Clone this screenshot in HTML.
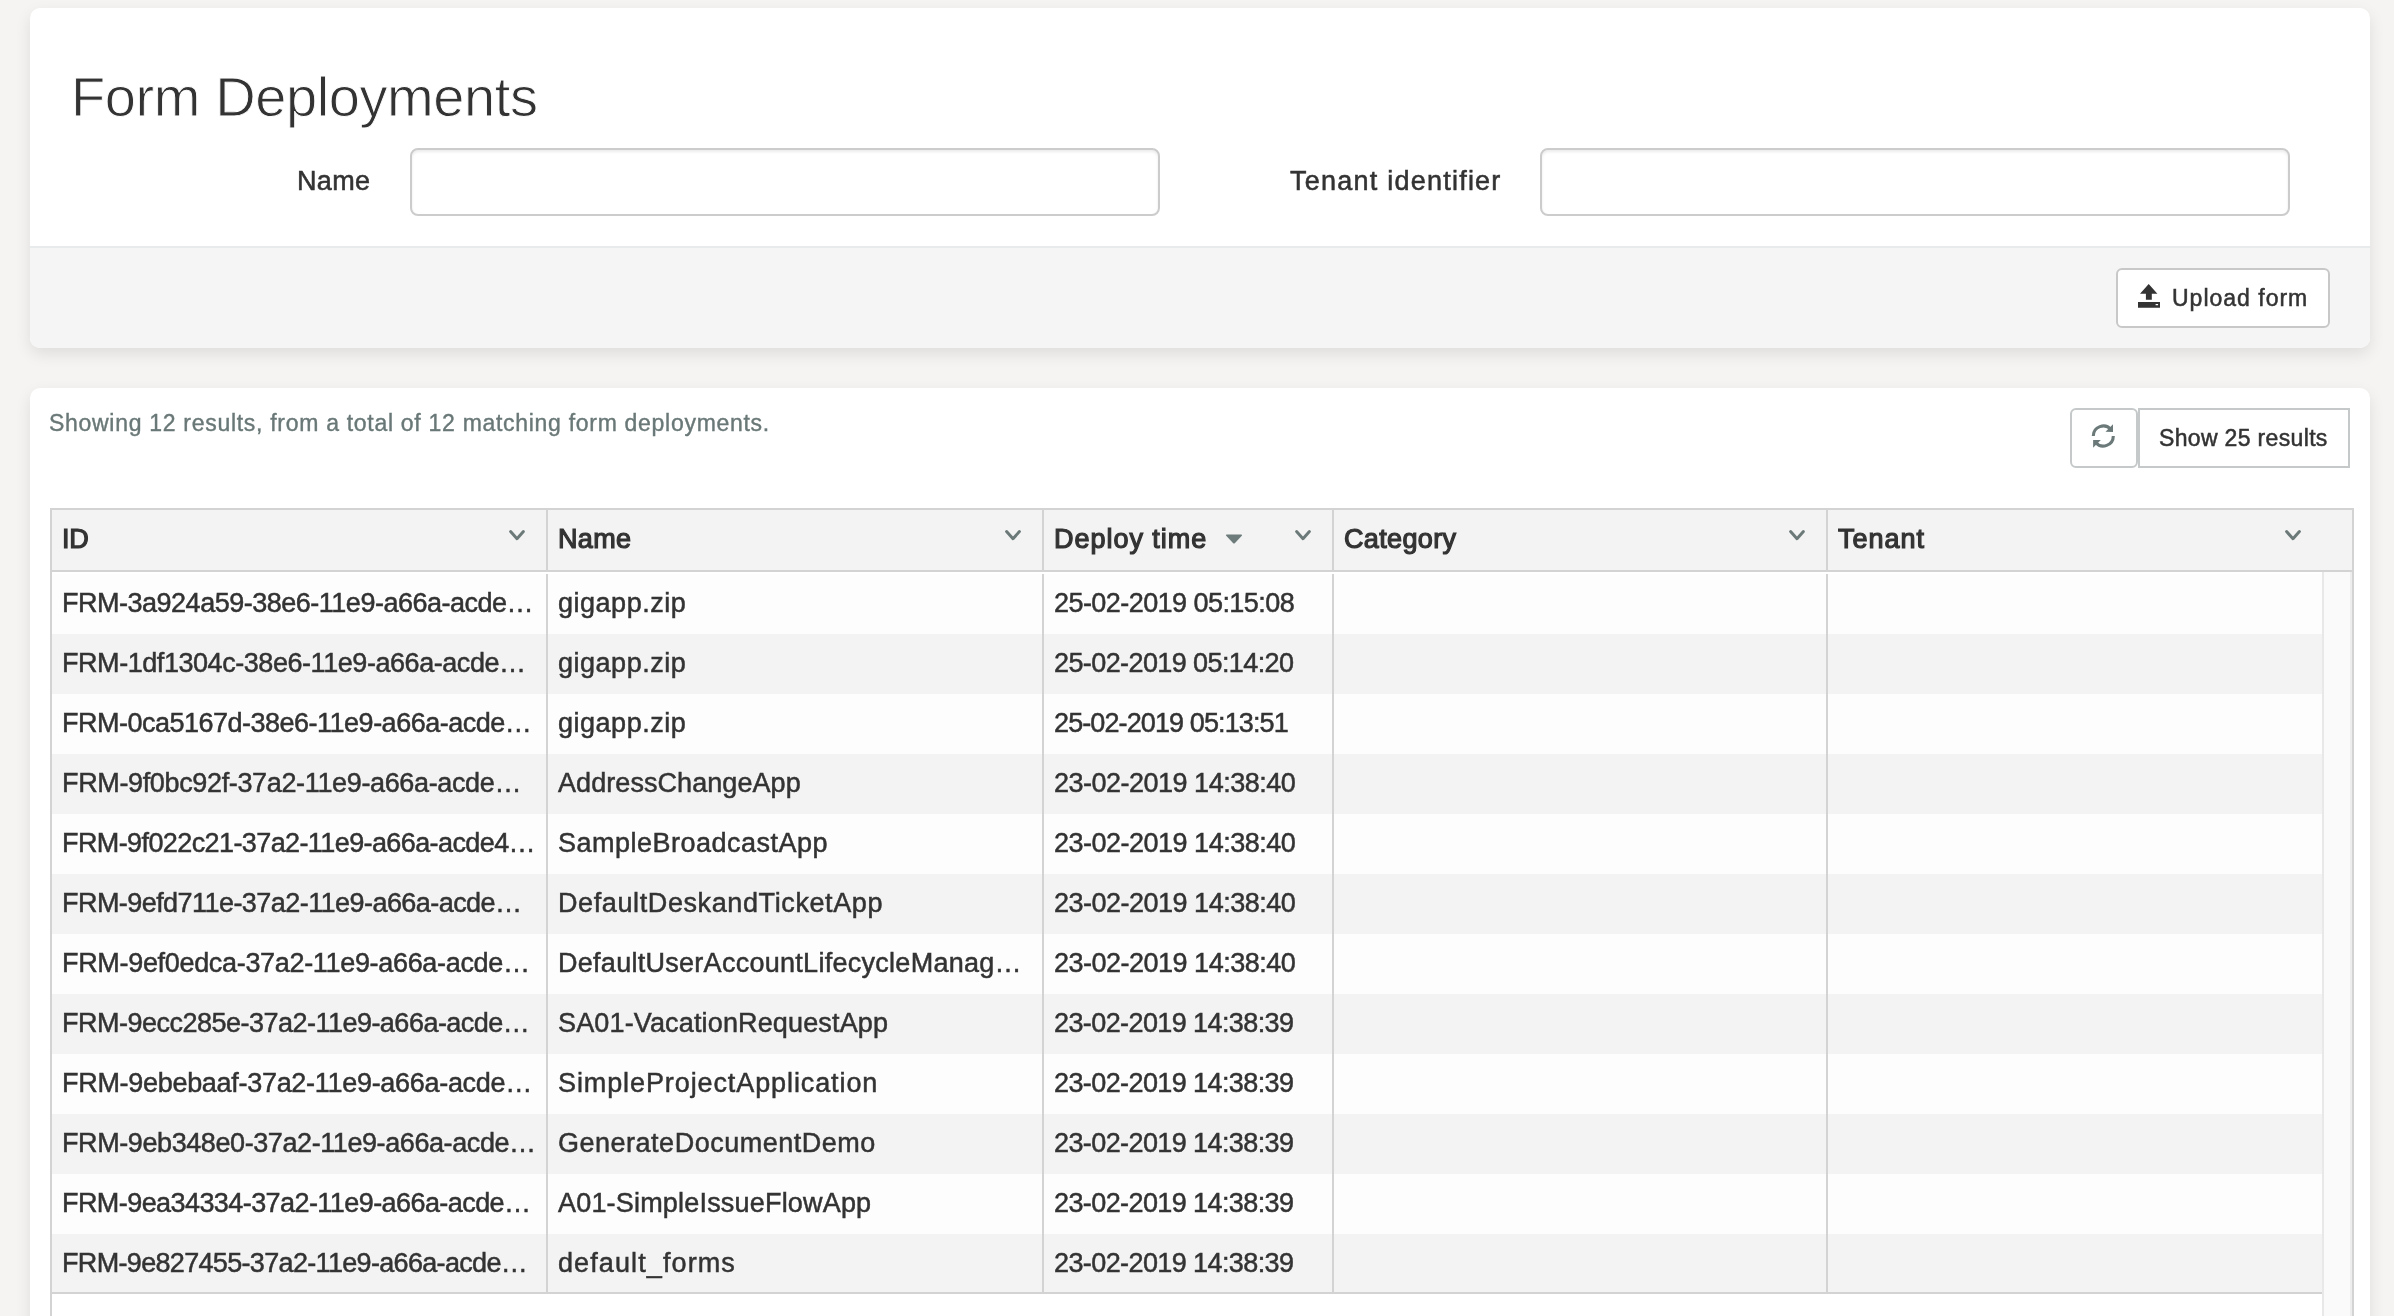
<!DOCTYPE html>
<html lang="en">
<head>
<meta charset="utf-8">
<title>Form Deployments</title>
<style>
*{box-sizing:border-box;margin:0;padding:0}
html,body{width:2394px;height:1316px;overflow:hidden;background:#f5f4f2}
body{font-family:"Liberation Sans",sans-serif;color:#333}
#page{position:relative;width:2394px;height:1316px;overflow:hidden}
#page>*{position:absolute}
h1,.lbl,.btn span,#showing,.th,.c{will-change:transform}
.card{left:30px;width:2340px;background:#fff;border-radius:10px;box-shadow:0 6px 16px rgba(0,0,0,.095)}
#c1{top:8px;height:340px}
#c2{top:388px;height:1000px}
h1{left:70.6px;top:62px;font-size:56px;font-weight:400;line-height:70px;white-space:nowrap;color:#333;-webkit-text-stroke:.9px #fff}
.lbl{top:148px;height:68px;line-height:66px;font-size:27px;white-space:nowrap;color:#333;-webkit-text-stroke:.55px #333;display:block}
#l1{right:2024px}
#l2{right:892.4px}
.inp{display:block;outline:none;padding:0 20px;font:27px "Liberation Sans",sans-serif;color:#333;top:148px;width:750px;height:68px;border:2px solid #ccc;border-radius:8px;background:#fff;box-shadow:inset 0 2px 3px rgba(0,0,0,.08)}
#i1{left:410px}
#i2{left:1540px}
#foot{left:30px;top:246px;width:2340px;height:102px;background:#f5f5f5;border-top:2px solid #e8ebec;border-radius:0 0 10px 10px}
.btn{display:block;padding:0;margin:0;font-family:"Liberation Sans",sans-serif;text-align:left;cursor:pointer;overflow:visible;height:60px;border:2px solid #c8c8c8;background:#fff;border-radius:6px;font-size:23px;line-height:56px;white-space:nowrap;color:#333;-webkit-text-stroke:.5px #333}
.btn>*{position:absolute}
#upload{left:2116px;top:268px;width:214px}
.ico-up{left:20px;top:14px;fill:#333}
#uptxt{left:54px;top:0}
#showing{left:48.5px;top:398px;font-size:23px;line-height:50px;color:#697877;white-space:nowrap;-webkit-text-stroke:.4px #697877}
#refresh{left:2070px;top:408px;width:68px;border-color:#c5c9c9}
.ico-rf{left:19px;top:13px;stroke:#6b7979}
.ico-rf .f{fill:#6b7979;stroke:none}
#show25{left:2138px;top:408px;width:212px;border-radius:0;border-color:#c5c9c9}
#s25txt{left:19px;top:0}
#grid{left:50px;top:508px;width:2304px;height:900px;border:2px solid #d3d3d3;border-bottom:none;background:#fff}
#ghead{left:52px;top:510px;width:2300px;height:62px;background:#f3f3f3;border-bottom:2px solid #d3d3d3}
.th{top:510px;height:60px;line-height:58px;font-size:27px;white-space:nowrap;color:#333;-webkit-text-stroke:1.2px #333}
.chev{top:528.5px;fill:none;stroke:#6b7978;stroke-width:3;stroke-linecap:round;stroke-linejoin:round}
.vh{top:510px;width:2px;height:60px;background:#d3d3d3}
.vb{top:574px;width:2px;height:720px;background:#d3d3d3}
.sorttri{left:1224.6px;top:533.8px;fill:#6d7b7b}
.row{left:52px;width:2270px;height:60px;background:#fdfdfd}
.row.odd{background:#f3f3f3}
.c{height:60px;line-height:58px;font-size:27px;white-space:nowrap;color:#333;-webkit-text-stroke:.5px #333}
#gbot{left:52px;top:1292px;width:2270px;height:2px;background:#d3d3d3}
#sbar{left:2322px;top:572px;width:30px;height:900px;background:#fafafa;border-left:2px solid #e8e8e8;border-right:2px solid #ededed}

</style>
</head>
<body>
<div id="page">
<div class="card" id="c1"></div>
<div class="card" id="c2"></div>
<h1 id="title" style="letter-spacing:-0.406px">Form Deployments</h1>
<label class="lbl" id="l1" for="i1" style="letter-spacing:0.312px">Name</label><input class="inp" id="i1" type="text">
<label class="lbl" id="l2" for="i2" style="letter-spacing:1.233px">Tenant identifier</label><input class="inp" id="i2" type="text">
<div id="foot"></div>
<button type="button" class="btn" id="upload"><svg class="ico-up" viewBox="0 0 22 24" width="22" height="24"><path d="M10.7 0 L19.4 9.8 H13.8 V15.8 H7.9 V9.8 H2 Z"/><path d="M0 18.1 H22 V23.8 H0 Z M17.6 20 V21.2 H20.1 V20 Z" fill-rule="evenodd"/></svg><span id="uptxt" style="letter-spacing:0.997px">Upload form</span></button>
<div id="showing" style="letter-spacing:0.706px">Showing 12 results, from a total of 12 matching form deployments.</div>
<button type="button" class="btn" id="refresh" title="Refresh"><svg viewBox="0 0 25 26" width="25" height="26" class="ico-rf"><path d="M2.3 13 A10 10 0 0 1 19.96 6.57" fill="none" stroke-width="3.1"/><path d="M22.3 13 A10 10 0 0 1 4.64 19.43" fill="none" stroke-width="3.1"/><path class="f" d="M22 1.2 V8.9 L14.5 8.7 Z"/><path class="f" d="M2.1 24.7 V17.1 H9.8 Z"/></svg></button>
<button type="button" class="btn" id="show25"><span id="s25txt" style="letter-spacing:0.338px">Show 25 results</span></button>
<div id="grid"></div>
<div id="ghead"></div>
<div class="row" style="top:574px"></div>
<div class="row odd" style="top:634px"></div>
<div class="row" style="top:694px"></div>
<div class="row odd" style="top:754px"></div>
<div class="row" style="top:814px"></div>
<div class="row odd" style="top:874px"></div>
<div class="row" style="top:934px"></div>
<div class="row odd" style="top:994px"></div>
<div class="row" style="top:1054px"></div>
<div class="row odd" style="top:1114px"></div>
<div class="row" style="top:1174px"></div>
<div class="row odd" style="top:1234px"></div>
<div id="gbot"></div>
<div id="sbar"></div>
<div class="th" style="left:62px;letter-spacing:-0.305px">ID</div>
<svg class="chev" style="left:507px" width="20" height="14" viewBox="0 0 20 14"><path d="M3.6 2.6 L10 9.7 L16.4 2.6"/></svg>
<div class="vh" style="left:546px"></div><div class="vb" style="left:546px"></div>
<div class="th" style="left:558px;letter-spacing:0.312px">Name</div>
<svg class="chev" style="left:1003px" width="20" height="14" viewBox="0 0 20 14"><path d="M3.6 2.6 L10 9.7 L16.4 2.6"/></svg>
<div class="vh" style="left:1042px"></div><div class="vb" style="left:1042px"></div>
<div class="th" style="left:1054px;letter-spacing:0.972px">Deploy time</div>
<svg class="chev" style="left:1293px" width="20" height="14" viewBox="0 0 20 14"><path d="M3.6 2.6 L10 9.7 L16.4 2.6"/></svg>
<div class="vh" style="left:1332px"></div><div class="vb" style="left:1332px"></div>
<div class="th" style="left:1344px;letter-spacing:0.352px">Category</div>
<svg class="chev" style="left:1787px" width="20" height="14" viewBox="0 0 20 14"><path d="M3.6 2.6 L10 9.7 L16.4 2.6"/></svg>
<div class="vh" style="left:1826px"></div><div class="vb" style="left:1826px"></div>
<div class="th" style="left:1838px;letter-spacing:0.987px">Tenant</div>
<svg class="chev" style="left:2283px" width="20" height="14" viewBox="0 0 20 14"><path d="M3.6 2.6 L10 9.7 L16.4 2.6"/></svg>
<svg class="sorttri" width="18" height="10" viewBox="0 0 18 10"><path d="M1.6 0.6 H16.4 Q17.6 0.8 16.8 1.8 L9.8 9.2 Q9 10 8.2 9.2 L1.2 1.8 Q0.4 0.8 1.6 0.6 Z"/></svg>
<span class="c" style="left:62px;top:574px;letter-spacing:-0.491px">FRM-3a924a59-38e6-11e9-a66a-acde…</span>
<span class="c" style="left:558px;top:574px;letter-spacing:0.519px">gigapp.zip</span>
<span class="c" style="left:1054px;top:574px;letter-spacing:-0.558px">25-02-2019 05:15:08</span>
<span class="c" style="left:62px;top:634px;letter-spacing:-0.445px">FRM-1df1304c-38e6-11e9-a66a-acde…</span>
<span class="c" style="left:558px;top:634px;letter-spacing:0.519px">gigapp.zip</span>
<span class="c" style="left:1054px;top:634px;letter-spacing:-0.595px">25-02-2019 05:14:20</span>
<span class="c" style="left:62px;top:694px;letter-spacing:-0.503px">FRM-0ca5167d-38e6-11e9-a66a-acde…</span>
<span class="c" style="left:558px;top:694px;letter-spacing:0.519px">gigapp.zip</span>
<span class="c" style="left:1054px;top:694px;letter-spacing:-0.888px">25-02-2019 05:13:51</span>
<span class="c" style="left:62px;top:754px;letter-spacing:-0.354px">FRM-9f0bc92f-37a2-11e9-a66a-acde…</span>
<span class="c" style="left:558px;top:754px;letter-spacing:0.068px">AddressChangeApp</span>
<span class="c" style="left:1054px;top:754px;letter-spacing:-0.499px">23-02-2019 14:38:40</span>
<span class="c" style="left:62px;top:814px;letter-spacing:-0.597px">FRM-9f022c21-37a2-11e9-a66a-acde4…</span>
<span class="c" style="left:558px;top:814px;letter-spacing:0.494px">SampleBroadcastApp</span>
<span class="c" style="left:1054px;top:814px;letter-spacing:-0.499px">23-02-2019 14:38:40</span>
<span class="c" style="left:62px;top:874px;letter-spacing:-0.555px">FRM-9efd711e-37a2-11e9-a66a-acde…</span>
<span class="c" style="left:558px;top:874px;letter-spacing:0.605px">DefaultDeskandTicketApp</span>
<span class="c" style="left:1054px;top:874px;letter-spacing:-0.499px">23-02-2019 14:38:40</span>
<span class="c" style="left:62px;top:934px;letter-spacing:-0.322px">FRM-9ef0edca-37a2-11e9-a66a-acde…</span>
<span class="c" style="left:558px;top:934px;letter-spacing:0.277px">DefaultUserAccountLifecycleManag…</span>
<span class="c" style="left:1054px;top:934px;letter-spacing:-0.499px">23-02-2019 14:38:40</span>
<span class="c" style="left:62px;top:994px;letter-spacing:-0.513px">FRM-9ecc285e-37a2-11e9-a66a-acde…</span>
<span class="c" style="left:558px;top:994px;letter-spacing:0.149px">SA01-VacationRequestApp</span>
<span class="c" style="left:1054px;top:994px;letter-spacing:-0.594px">23-02-2019 14:38:39</span>
<span class="c" style="left:62px;top:1054px;letter-spacing:-0.298px">FRM-9ebebaaf-37a2-11e9-a66a-acde…</span>
<span class="c" style="left:558px;top:1054px;letter-spacing:0.9px">SimpleProjectApplication</span>
<span class="c" style="left:1054px;top:1054px;letter-spacing:-0.594px">23-02-2019 14:38:39</span>
<span class="c" style="left:62px;top:1114px;letter-spacing:-0.413px">FRM-9eb348e0-37a2-11e9-a66a-acde…</span>
<span class="c" style="left:558px;top:1114px;letter-spacing:0.508px">GenerateDocumentDemo</span>
<span class="c" style="left:1054px;top:1114px;letter-spacing:-0.594px">23-02-2019 14:38:39</span>
<span class="c" style="left:62px;top:1174px;letter-spacing:-0.571px">FRM-9ea34334-37a2-11e9-a66a-acde…</span>
<span class="c" style="left:558px;top:1174px;letter-spacing:0.19px">A01-SimpleIssueFlowApp</span>
<span class="c" style="left:1054px;top:1174px;letter-spacing:-0.594px">23-02-2019 14:38:39</span>
<span class="c" style="left:62px;top:1234px;letter-spacing:-0.672px">FRM-9e827455-37a2-11e9-a66a-acde…</span>
<span class="c" style="left:558px;top:1234px;letter-spacing:1.105px">default_forms</span>
<span class="c" style="left:1054px;top:1234px;letter-spacing:-0.594px">23-02-2019 14:38:39</span>
</div>
</body>
</html>
